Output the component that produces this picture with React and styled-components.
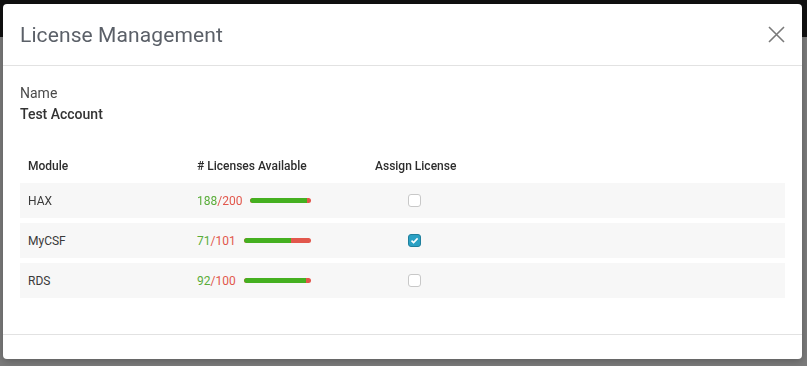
import React, { useState } from "react";
import styled, { createGlobalStyle } from "styled-components";

const GlobalStyle = createGlobalStyle`
    * { box-sizing: border-box; }
    html, body { margin: 0; padding: 0; }
    body {
        width: 807px;
        height: 366px;
        overflow: hidden;
        font-family: Roboto, "Liberation Sans", sans-serif;
        background: #ffffff;
    }
`

const Page = styled.div`
    width: 807px;
    height: 366px;
    display: flex;
    flex-direction: column;
`
const TopBar = styled.div`
    height: 37px;
    background-color: #222222;
`
const PageBody = styled.div`
    flex: 1;
    background-color: #f6f6f6;
`
const Overlay = styled.div`
    position: fixed;
    inset: 0;
    background-color: rgba(0, 0, 0, 0.5);
    padding: 4px 5px 7px 3px;
    display: flex;
`
const Modal = styled.div`
    flex: 1;
    display: flex;
    flex-direction: column;
    background-color: #ffffff;
    border-radius: 4px;
    box-shadow: 0 2px 8px rgba(0, 0, 0, 0.25);
`
const ModalHeader = styled.div`
    height: 62px;
    display: flex;
    justify-content: space-between;
    align-items: center;
    padding: 0 14px 0 17px;
    border-bottom: 1px solid #e2e2e2;
`
const Title = styled.h2`
    margin: 0;
    font-size: 21px;
    font-weight: 400;
    color: #5b6068;
    letter-spacing: 0.1px;
`
const CloseButton = styled.button`
    width: 24px;
    height: 24px;
    border: none;
    background: none;
    padding: 0;
    display: flex;
    align-items: center;
    justify-content: center;
    cursor: pointer;
`
const ModalBody = styled.div`
    flex: 1;
    padding: 19px 17px 0 17px;
`
const Label = styled.div`
    font-size: 14px;
    line-height: 16px;
    color: #4a4a4a;
`
const Value = styled.div`
    font-size: 14px;
    line-height: 16px;
    font-weight: 500;
    color: #333333;
    margin-top: 5px;
`
const Table = styled.div`
    margin-top: 30px;
    display: flex;
    flex-direction: column;
    gap: 5px;
`
const Row = styled.div`
    display: grid;
    grid-template-columns: 169px 178px 1fr;
    align-items: center;
    height: ${p => (p.$head ? "28px" : "35px")};
    padding-left: 8px;
    background-color: ${p => (p.$head ? "transparent" : "#f7f7f7")};
    margin-bottom: ${p => (p.$head ? "-2px" : "0")};
`
const HeadCell = styled.div`
    font-size: 12px;
    font-weight: 500;
    color: #2d2d2d;
`
const Cell = styled.div`
    font-size: 12px;
    color: #3a3a3a;
`
const Usage = styled.div`
    width: 114px;
    display: flex;
    align-items: center;
    gap: 8px;
    font-size: 12px;
`
const Used = styled.span`
    color: #5aad3a;
`
const Total = styled.span`
    color: #e2574c;
`
const Bar = styled.div`
    flex: 1;
    height: 5px;
    border-radius: 3px;
    background-color: #e2574c;
    overflow: hidden;
`
const Fill = styled.div`
    height: 100%;
    background-color: #45b020;
    border-radius: 3px 0 0 3px;
`
const CheckCell = styled.div`
    padding-left: 33px;
    display: flex;
`
const Check = styled.button`
    width: 13px;
    height: 13px;
    padding: 0;
    border-radius: 3px;
    border: 1px solid ${p => (p.$on ? "#1f7f9c" : "#c8c8c8")};
    background-color: ${p => (p.$on ? "#2ba1c4" : "#ffffff")};
    display: flex;
    align-items: center;
    justify-content: center;
    cursor: pointer;
`
const ModalFooter = styled.div`
    height: 25px;
    border-top: 1px solid #e2e2e2;
`

const modules = [
    { name: "HAX", used: 188, total: 200, assigned: false },
    { name: "MyCSF", used: 71, total: 101, assigned: true },
    { name: "RDS", used: 92, total: 100, assigned: false },
]

const App = () => {
    const [rows, setRows] = useState(modules);

    const toggle = (i) => {
        setRows(rows.map((r, idx) => idx === i ? { ...r, assigned: !r.assigned } : r));
    }

    return (
        <>
            <GlobalStyle />
            <Page>
                <TopBar />
                <PageBody />
            </Page>
            <Overlay>
                <Modal>
                    <ModalHeader>
                        <Title>License Management</Title>
                        <CloseButton aria-label="Close">
                            <svg width="17" height="17" viewBox="0 0 17 17">
                                <path d="M1 1 L16 16 M16 1 L1 16" stroke="#7a7a7a" strokeWidth="1.6" fill="none" />
                            </svg>
                        </CloseButton>
                    </ModalHeader>
                    <ModalBody>
                        <Label>Name</Label>
                        <Value>Test Account</Value>
                        <Table>
                            <Row $head>
                                <HeadCell>Module</HeadCell>
                                <HeadCell># Licenses Available</HeadCell>
                                <HeadCell>Assign License</HeadCell>
                            </Row>
                            {rows.map((r, i) => (
                                <Row key={r.name}>
                                    <Cell>{r.name}</Cell>
                                    <Usage>
                                        <span><Used>{r.used}</Used><Total>/{r.total}</Total></span>
                                        <Bar>
                                            <Fill style={{ width: `${(r.used / r.total) * 100}%` }} />
                                        </Bar>
                                    </Usage>
                                    <CheckCell>
                                        <Check $on={r.assigned} onClick={() => toggle(i)}>
                                            {r.assigned &&
                                                <svg width="9" height="9" viewBox="0 0 9 9">
                                                    <path d="M1.5 4.6 L3.6 6.6 L7.6 2.4" stroke="#ffffff" strokeWidth="1.6" fill="none" />
                                                </svg>
                                            }
                                        </Check>
                                    </CheckCell>
                                </Row>
                            ))}
                        </Table>
                    </ModalBody>
                    <ModalFooter />
                </Modal>
            </Overlay>
        </>
    )
}

export default App;
